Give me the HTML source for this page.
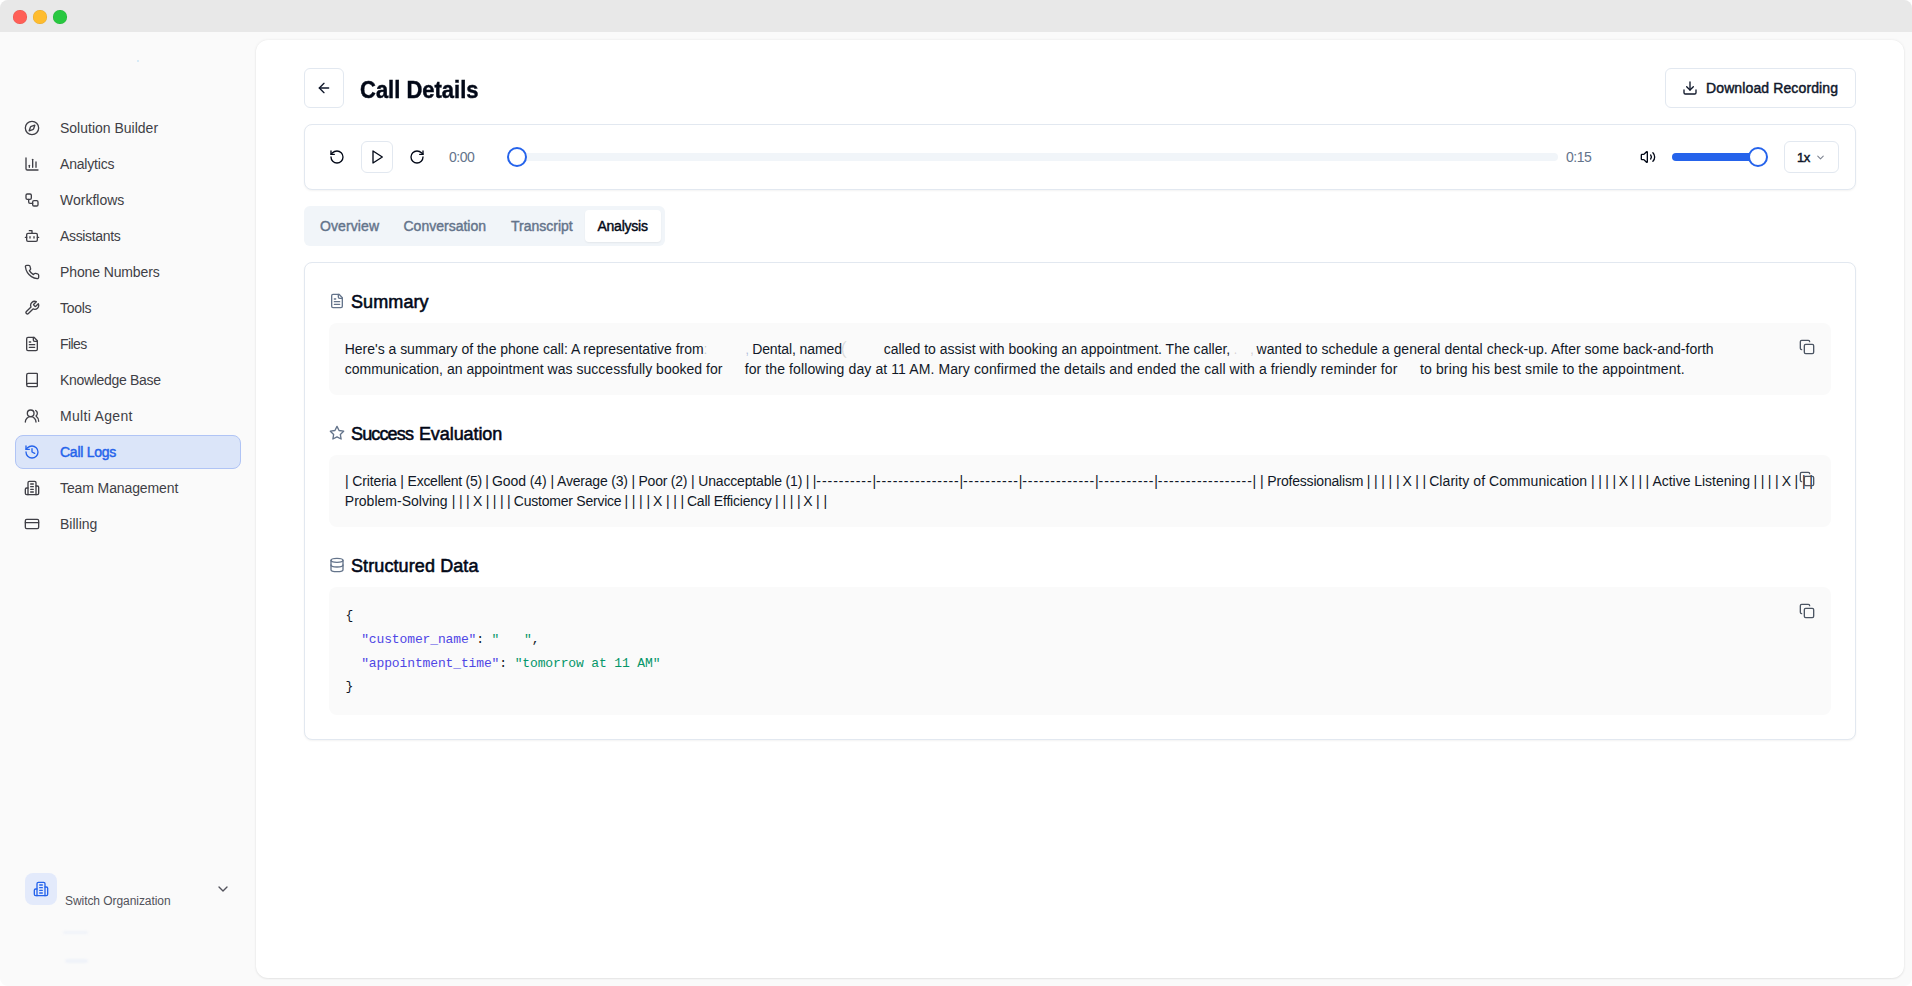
<!DOCTYPE html>
<html lang="en">
<head>
<meta charset="utf-8">
<title>Call Details</title>
<style>
*{box-sizing:border-box;margin:0;padding:0}
html,body{width:1912px;height:986px;overflow:hidden;background:#fff}
body{font-family:"Liberation Sans",Arial,sans-serif;color:#020817;position:relative}
svg{display:block}
.ico{position:absolute;fill:none;stroke:currentColor;stroke-width:2;stroke-linecap:round;stroke-linejoin:round;width:16px;height:16px}
.abs{position:absolute;white-space:nowrap}
#win{position:absolute;left:0;top:0;width:1912px;height:986px;background:#fafafa;border-radius:8px;overflow:hidden}
#titlebar{position:absolute;left:0;top:0;width:1912px;height:32px;background:#e8e8e8}
.tl{position:absolute;top:10.4px;width:13.2px;height:13.2px;border-radius:50%;box-shadow:inset 0 0 0 .5px rgba(0,0,0,.10)}
.nav{position:absolute;left:60px;font-size:14px;line-height:20px;color:#3f3f46;white-space:nowrap}
.ni{color:#3f3f46;left:24px}
.semi{-webkit-text-stroke:.45px currentColor}
#main{position:absolute;left:256px;top:40px;width:1648px;height:938px;background:#fff;border-radius:12px;box-shadow:0 0 3px rgba(0,0,0,.08),0 1px 2px rgba(0,0,0,.06)}
.btn{position:absolute;border:1px solid #e2e8f0;border-radius:6px;background:#fff}
.card{position:absolute;border:1px solid #e2e8f0;border-radius:8px;background:#fff;box-shadow:0 1px 2px rgba(0,0,0,.05)}
h1{position:absolute;left:360px;top:73px;font-size:24px;line-height:34px;font-weight:700;color:#020817;white-space:nowrap;transform:scaleX(.916);transform-origin:0 50%;-webkit-text-stroke:.45px currentColor}
.sec-h{position:absolute;left:351px;font-size:18px;line-height:24px;color:#020817;white-space:nowrap;-webkit-text-stroke:.55px currentColor}
.sec-i{color:#64748b}
.box{position:absolute;left:329px;width:1502px;background:#fafafa;border-radius:8px}
.sg{position:absolute;font-size:14px;line-height:20px;color:#111827;white-space:pre}
.copy{color:#4b5563;left:1799px}
.tab{position:absolute;top:216px;line-height:20px;font-size:14px;color:#64748b;white-space:nowrap;-webkit-text-stroke:.42px currentColor}
.mono{position:absolute;font-family:"Liberation Mono","DejaVu Sans Mono",monospace;font-size:13px;letter-spacing:-.13px;line-height:20px;color:#111827;white-space:pre}
.k{color:#4f46e5}.v{color:#059669}
</style>
</head>
<body>
<div id="win">
<div id="titlebar">
  <div class="tl" style="left:13.4px;background:#ff5f57"></div>
  <div class="tl" style="left:33.4px;background:#febc2e"></div>
  <div class="tl" style="left:53.4px;background:#28c840"></div>
</div>

<!-- sidebar -->
<div style="position:absolute;left:15px;top:435px;width:226px;height:34px;border-radius:8px;background:#dbe5f9;border:1px solid #b0c4f5"></div>

<svg class="ico ni" viewBox="0 0 24 24" style="top:120px"><circle cx="12" cy="12" r="10"/><path d="m16.24 7.76-1.804 5.411a2 2 0 0 1-1.265 1.265L7.76 16.24l1.804-5.411a2 2 0 0 1 1.265-1.265z"/></svg>
<div class="nav" style="top:118px">Solution Builder</div>
<svg class="ico ni" viewBox="0 0 24 24" style="top:156px"><path d="M3 3v16a2 2 0 0 0 2 2h16"/><path d="M18 17V9"/><path d="M13 17V5"/><path d="M8 17v-3"/></svg>
<div class="nav" style="top:154px;letter-spacing:-.19px">Analytics</div>
<svg class="ico ni" viewBox="0 0 24 24" style="top:192px"><rect width="8" height="8" x="3" y="3" rx="2"/><path d="M7 11v4a2 2 0 0 0 2 2h4"/><rect width="8" height="8" x="13" y="13" rx="2"/></svg>
<div class="nav" style="top:190px">Workflows</div>
<svg class="ico ni" viewBox="0 0 24 24" style="top:228px"><path d="M12 8V4H8"/><rect width="16" height="12" x="4" y="8" rx="2"/><path d="M2 14h2"/><path d="M20 14h2"/><path d="M15 13v2"/><path d="M9 13v2"/></svg>
<div class="nav" style="top:226px;letter-spacing:-.34px">Assistants</div>
<svg class="ico ni" viewBox="0 0 24 24" style="top:264px"><path d="M22 16.92v3a2 2 0 0 1-2.18 2 19.79 19.79 0 0 1-8.63-3.07 19.5 19.5 0 0 1-6-6 19.79 19.79 0 0 1-3.07-8.67A2 2 0 0 1 4.11 2h3a2 2 0 0 1 2 1.72 12.84 12.84 0 0 0 .7 2.81 2 2 0 0 1-.45 2.11L8.09 9.91a16 16 0 0 0 6 6l1.27-1.27a2 2 0 0 1 2.11-.45 12.84 12.84 0 0 0 2.81.7A2 2 0 0 1 22 16.92z"/></svg>
<div class="nav" style="top:262px;letter-spacing:-.12px">Phone Numbers</div>
<svg class="ico ni" viewBox="0 0 24 24" style="top:300px"><path d="M14.7 6.3a1 1 0 0 0 0 1.4l1.6 1.6a1 1 0 0 0 1.4 0l3.77-3.77a6 6 0 0 1-7.94 7.94l-6.91 6.91a2.12 2.12 0 0 1-3-3l6.91-6.91a6 6 0 0 1 7.94-7.94l-3.76 3.76z"/></svg>
<div class="nav" style="top:298px;letter-spacing:-.3px">Tools</div>
<svg class="ico ni" viewBox="0 0 24 24" style="top:336px"><path d="M15 2H6a2 2 0 0 0-2 2v16a2 2 0 0 0 2 2h12a2 2 0 0 0 2-2V7Z"/><path d="M14 2v4a2 2 0 0 0 2 2h4"/><path d="M10 9H8"/><path d="M16 13H8"/><path d="M16 17H8"/></svg>
<div class="nav" style="top:334px;letter-spacing:-.6px">Files</div>
<svg class="ico ni" viewBox="0 0 24 24" style="top:372px"><path d="M4 19.5v-15A2.5 2.5 0 0 1 6.5 2H19a1 1 0 0 1 1 1v18a1 1 0 0 1-1 1H6.5a1 1 0 0 1 0-5H20"/></svg>
<div class="nav" style="top:370px;letter-spacing:-.31px">Knowledge Base</div>
<svg class="ico ni" viewBox="0 0 24 24" style="top:408px"><path d="M18 21a8 8 0 0 0-16 0"/><circle cx="10" cy="8" r="5"/><path d="M22 20c0-3.37-2-6.5-4-8a5 5 0 0 0-.45-8.3"/></svg>
<div class="nav" style="top:406px;letter-spacing:.32px">Multi Agent</div>
<svg class="ico ni" viewBox="0 0 24 24" style="top:444px;color:#2563eb"><path d="M3 12a9 9 0 1 0 9-9 9.75 9.75 0 0 0-6.74 2.74L3 8"/><path d="M3 3v5h5"/><path d="M12 7v5l4 2"/></svg>
<div class="nav semi" style="top:442px;letter-spacing:-.25px;color:#2563eb">Call Logs</div>
<svg class="ico ni" viewBox="0 0 24 24" style="top:480px"><path d="M6 22V4a2 2 0 0 1 2-2h8a2 2 0 0 1 2 2v18Z"/><path d="M6 12H4a2 2 0 0 0-2 2v6a2 2 0 0 0 2 2h2"/><path d="M18 9h2a2 2 0 0 1 2 2v9a2 2 0 0 1-2 2h-2"/><path d="M10 6h4"/><path d="M10 10h4"/><path d="M10 14h4"/><path d="M10 18h4"/></svg>
<div class="nav" style="top:478px;letter-spacing:-.11px">Team Management</div>
<svg class="ico ni" viewBox="0 0 24 24" style="top:516px"><rect width="20" height="14" x="2" y="5" rx="2"/><line x1="2" x2="22" y1="10" y2="10"/></svg>
<div class="nav" style="top:514px">Billing</div>

<!-- org switcher -->
<div style="position:absolute;left:25px;top:873px;width:32px;height:32px;border-radius:8px;background:#e3eafb"></div>
<svg class="ico" viewBox="0 0 24 24" style="left:33px;top:881px;color:#2563eb"><path d="M6 22V4a2 2 0 0 1 2-2h8a2 2 0 0 1 2 2v18Z"/><path d="M6 12H4a2 2 0 0 0-2 2v6a2 2 0 0 0 2 2h2"/><path d="M18 9h2a2 2 0 0 1 2 2v9a2 2 0 0 1-2 2h-2"/><path d="M10 6h4"/><path d="M10 10h4"/><path d="M10 14h4"/><path d="M10 18h4"/></svg>
<div class="abs" style="left:65px;top:893px;font-size:12px;line-height:16px;letter-spacing:-.06px;color:#52525b">Switch Organization</div>
<svg class="ico" viewBox="0 0 24 24" style="left:215px;top:881px;color:#52525b"><path d="m6 9 6 6 6-6"/></svg>
<div style="position:absolute;left:63px;top:931px;width:25px;height:3px;border-radius:2px;background:#e4ebf8;filter:blur(1px);opacity:.45"></div>
<div style="position:absolute;left:65px;top:959px;width:23px;height:4px;border-radius:2px;background:#e4ebf8;filter:blur(1.2px);opacity:.5"></div>

<div id="main"></div>

<!-- header -->
<div class="btn" style="left:304px;top:68px;width:40px;height:40px"></div>
<svg class="ico" viewBox="0 0 24 24" style="left:316px;top:80px;color:#0f172a"><path d="m12 19-7-7 7-7"/><path d="M19 12H5"/></svg>
<h1>Call Details</h1>
<div class="btn" style="left:1665px;top:68px;width:191px;height:40px"></div>
<svg class="ico" viewBox="0 0 24 24" style="left:1682px;top:80px;color:#0f172a"><path d="M21 15v4a2 2 0 0 1-2 2H5a2 2 0 0 1-2-2v-4"/><polyline points="7 10 12 15 17 10"/><line x1="12" x2="12" y1="15" y2="3"/></svg>
<div class="abs semi" style="left:1706px;top:78px;line-height:20px;font-size:14px;letter-spacing:.12px;color:#0f172a">Download Recording</div>

<!-- player -->
<div class="card" style="left:304px;top:124px;width:1552px;height:66px"></div>
<svg class="ico" viewBox="0 0 24 24" style="left:328.7px;top:148.7px;color:#020817"><path d="M3 12a9 9 0 1 0 9-9 9.75 9.75 0 0 0-6.74 2.74L3 8"/><path d="M3 3v5h5"/></svg>
<div class="btn" style="left:361px;top:141px;width:32px;height:32px"></div>
<svg class="ico" viewBox="0 0 24 24" style="left:368.6px;top:148.8px;color:#020817"><polygon points="6 3 20 12 6 21 6 3"/></svg>
<svg class="ico" viewBox="0 0 24 24" style="left:409px;top:148.7px;color:#020817"><path d="M21 12a9 9 0 1 1-9-9c2.52 0 4.93 1 6.74 2.74L21 8"/><path d="M21 3v5h-5"/></svg>
<div class="abs" style="left:449px;top:147px;font-size:14px;line-height:20px;letter-spacing:-.45px;color:#64748b">0:00</div>
<div style="position:absolute;left:516px;top:153px;width:1042px;height:8px;border-radius:4px;background:#f1f5f9"></div>
<div style="position:absolute;left:507px;top:147px;width:20px;height:20px;border-radius:50%;border:2px solid #2563eb;background:#fff"></div>
<div class="abs" style="left:1566px;top:147px;font-size:14px;line-height:20px;letter-spacing:-.45px;color:#64748b">0:15</div>
<svg class="ico" viewBox="0 0 24 24" style="left:1640px;top:149px;color:#020817"><path d="M11 4.702a.705.705 0 0 0-1.203-.498L6.413 7.587A1.4 1.4 0 0 1 5.416 8H3a1 1 0 0 0-1 1v6a1 1 0 0 0 1 1h2.416a1.4 1.4 0 0 1 .997.413l3.383 3.384A.705.705 0 0 0 11 19.298z"/><path d="M16 9a5 5 0 0 1 0 6"/><path d="M19.364 18.364a9 9 0 0 0 0-12.728"/></svg>
<div style="position:absolute;left:1672px;top:153px;width:88px;height:8px;border-radius:4px;background:#2563eb"></div>
<div style="position:absolute;left:1748px;top:147px;width:20px;height:20px;border-radius:50%;border:2px solid #2563eb;background:#fff"></div>
<div class="btn" style="left:1784px;top:141px;width:55px;height:32px"></div>
<div class="abs semi" style="left:1797px;top:148px;line-height:20px;font-size:13px;letter-spacing:-.6px;color:#0f172a">1x</div>
<svg class="ico" viewBox="0 0 24 24" style="left:1814.6px;top:151.6px;width:11px;height:11px;color:#7c8290;stroke-width:2.3"><path d="m6 9 6 6 6-6"/></svg>

<!-- tabs -->
<div style="position:absolute;left:304px;top:206px;width:361px;height:40px;border-radius:6px;background:#f1f5f9"></div>
<div style="position:absolute;left:585px;top:210px;width:76px;height:32px;border-radius:4px;background:#fff;box-shadow:0 1px 2px rgba(0,0,0,.06)"></div>
<div class="tab" style="left:320px;letter-spacing:.1px">Overview</div>
<div class="tab" style="left:403.5px">Conversation</div>
<div class="tab" style="left:511px">Transcript</div>
<div class="tab" style="left:597.5px;letter-spacing:-.25px;color:#020817">Analysis</div>

<!-- content -->
<div class="card" style="left:304px;top:262px;width:1552px;height:478px"></div>

<svg class="ico sec-i" viewBox="0 0 24 24" style="left:328.7px;top:293.2px"><path d="M15 2H6a2 2 0 0 0-2 2v16a2 2 0 0 0 2 2h12a2 2 0 0 0 2-2V7Z"/><path d="M14 2v4a2 2 0 0 0 2 2h4"/><path d="M10 9H8"/><path d="M16 13H8"/><path d="M16 17H8"/></svg>
<div class="sec-h" style="top:290px;letter-spacing:.1px">Summary</div>
<div class="box" style="top:323px;height:72px"></div>
<svg class="ico copy" viewBox="0 0 24 24" style="top:339px"><rect width="14" height="14" x="8" y="8" rx="2" ry="2"/><path d="M4 16c-1.1 0-2-.9-2-2V4c0-1.1.9-2 2-2h10c1.1 0 2 .9 2 2"/></svg>

<svg class="ico sec-i" viewBox="0 0 24 24" style="left:329.1px;top:425.3px"><polygon points="12 2 15.09 8.26 22 9.27 17 14.14 18.18 21.02 12 17.77 5.82 21.02 7 14.14 2 9.27 8.91 8.26 12 2"/></svg>
<div class="sec-h" style="top:422px"><span style="letter-spacing:-.85px">Success</span><span style="letter-spacing:.8px"> </span><span style="letter-spacing:-.07px">Evaluation</span></div>
<div class="box" style="top:455px;height:72px"></div>

<svg class="ico sec-i" viewBox="0 0 24 24" style="left:329.3px;top:557.1px"><ellipse cx="12" cy="5" rx="9" ry="3"/><path d="M3 5V19A9 3 0 0 0 21 19V5"/><path d="M3 12A9 3 0 0 0 21 12"/></svg>
<div class="sec-h" style="top:554px;letter-spacing:.1px">Structured Data</div>
<div class="box" style="top:587px;height:128px"></div>

<div style="position:absolute;left:136.5px;top:59.8px;width:2.5px;height:2px;background:#cde6f6;border-radius:1px;filter:blur(.4px)"></div>
<span class="sg" style="left:703.5px;top:339px;color:rgba(17,24,39,.22)">:</span>
<span class="sg" style="left:745.2px;top:339px;color:rgba(60,90,170,.38)">,</span>
<span class="sg" style="left:840.5px;top:338px;font-size:19px;color:rgba(0,0,0,.12)">(</span>
<span class="sg" style="left:1233.5px;top:339px;color:rgba(17,24,39,.18)">.</span>
<span class="sg" style="left:1250px;top:339px;color:rgba(17,24,39,.2)">,</span>
<span class="sg" style="left:344.7px;top:339px;letter-spacing:-0.015px">Here&#x27;s a summary of the phone call: A representative from</span>
<span class="sg" style="left:752.2px;top:339px;letter-spacing:-0.105px">Dental, named</span>
<span class="sg" style="left:883.7px;top:339px;letter-spacing:0.009px">called to assist with booking an appointment. The caller,</span>
<span class="sg" style="left:1256.5px;top:339px;letter-spacing:0.038px">wanted to schedule a general dental check-up. After some back-and-forth</span>
<span class="sg" style="left:344.7px;top:359px;letter-spacing:0.020px">communication, an appointment was successfully booked for</span>
<span class="sg" style="left:744.7px;top:359px;letter-spacing:0.104px">for the following day at 11 AM. Mary confirmed the details and ended the call with a friendly reminder for</span>
<span class="sg" style="left:1420.0px;top:359px;letter-spacing:0.129px">to bring his best smile to the appointment.</span>
<span class="sg" style="left:345.1px;top:471px">|</span>
<span class="sg" style="left:352.2px;top:471px;letter-spacing:-0.103px">Criteria</span>
<span class="sg" style="left:400.3px;top:471px">|</span>
<span class="sg" style="left:407.6px;top:471px;letter-spacing:-0.270px">Excellent (5)</span>
<span class="sg" style="left:485.2px;top:471px">|</span>
<span class="sg" style="left:492.0px;top:471px;letter-spacing:-0.081px">Good (4)</span>
<span class="sg" style="left:550.4px;top:471px">|</span>
<span class="sg" style="left:557.1px;top:471px;letter-spacing:-0.210px">Average (3)</span>
<span class="sg" style="left:631.5px;top:471px">|</span>
<span class="sg" style="left:638.5px;top:471px;letter-spacing:-0.235px">Poor (2)</span>
<span class="sg" style="left:691.0px;top:471px">|</span>
<span class="sg" style="left:698.2px;top:471px;letter-spacing:-0.164px">Unacceptable (1)</span>
<span class="sg" style="left:805.7px;top:471px;letter-spacing:-0.216px">| |</span>
<span class="sg" style="left:816.3px;top:471px;letter-spacing:0.963px">----------</span>
<span class="sg" style="left:872.4px;top:471px">|</span>
<span class="sg" style="left:875.9px;top:471px;letter-spacing:0.921px">---------------</span>
<span class="sg" style="left:959.5px;top:471px">|</span>
<span class="sg" style="left:963.0px;top:471px;letter-spacing:0.923px">----------</span>
<span class="sg" style="left:1018.7px;top:471px">|</span>
<span class="sg" style="left:1022.2px;top:471px;letter-spacing:0.957px">-------------</span>
<span class="sg" style="left:1095.1px;top:471px">|</span>
<span class="sg" style="left:1098.6px;top:471px;letter-spacing:0.922px">----------</span>
<span class="sg" style="left:1154.3px;top:471px">|</span>
<span class="sg" style="left:1157.8px;top:471px;letter-spacing:0.923px">-----------------</span>
<span class="sg" style="left:1252.6px;top:471px;letter-spacing:-0.066px">| |</span>
<span class="sg" style="left:1267.3px;top:471px;letter-spacing:-0.195px">Professionalism</span>
<span class="sg" style="left:1366.7px;top:471px;letter-spacing:-0.114px">| | | | |</span>
<span class="sg" style="left:1402.4px;top:471px;letter-spacing:0.156px">X</span>
<span class="sg" style="left:1415.2px;top:471px;letter-spacing:-0.166px">| |</span>
<span class="sg" style="left:1429.2px;top:471px;letter-spacing:0.067px">Clarity of Communication</span>
<span class="sg" style="left:1590.9px;top:471px;letter-spacing:-0.146px">| | | |</span>
<span class="sg" style="left:1618.8px;top:471px;letter-spacing:0.456px">X</span>
<span class="sg" style="left:1631.2px;top:471px;letter-spacing:-0.166px">| | |</span>
<span class="sg" style="left:1652.5px;top:471px;letter-spacing:-0.035px">Active Listening</span>
<span class="sg" style="left:1753.4px;top:471px;letter-spacing:-0.146px">| | | |</span>
<span class="sg" style="left:1781.7px;top:471px;letter-spacing:0.356px">X</span>
<span class="sg" style="left:1794.6px;top:471px;letter-spacing:-0.116px">| | |</span>
<span class="sg" style="left:344.8px;top:491px;letter-spacing:0.005px">Problem-Solving</span>
<span class="sg" style="left:451.8px;top:491px;letter-spacing:-0.216px">| | |</span>
<span class="sg" style="left:472.9px;top:491px;letter-spacing:-0.344px">X</span>
<span class="sg" style="left:485.7px;top:491px;letter-spacing:-0.213px">| | | |</span>
<span class="sg" style="left:513.8px;top:491px;letter-spacing:-0.229px">Customer Service</span>
<span class="sg" style="left:624.4px;top:491px;letter-spacing:-0.080px">| | | |</span>
<span class="sg" style="left:653.0px;top:491px;letter-spacing:0.256px">X</span>
<span class="sg" style="left:665.9px;top:491px;letter-spacing:-0.141px">| | |</span>
<span class="sg" style="left:686.9px;top:491px;letter-spacing:-0.205px">Call Efficiency</span>
<span class="sg" style="left:775.1px;top:491px;letter-spacing:-0.096px">| | | |</span>
<span class="sg" style="left:803.2px;top:491px;letter-spacing:0.156px">X</span>
<span class="sg" style="left:815.9px;top:491px;letter-spacing:-0.016px">| |</span>

<svg class="ico copy" viewBox="0 0 24 24" style="top:471px"><rect width="14" height="14" x="8" y="8" rx="2" ry="2"/><path d="M4 16c-1.1 0-2-.9-2-2V4c0-1.1.9-2 2-2h10c1.1 0 2 .9 2 2"/></svg>

<div class="mono" style="left:345.5px;top:606px">{</div>
<div class="mono" style="left:361.2px;top:629.8px"><span class="k">"customer_name"</span>: <span class="v">"</span></div>
<div class="mono" style="left:524px;top:629.8px"><span class="v">"</span>,</div>
<div class="mono" style="left:361.2px;top:653.6px"><span class="k">"appointment_time"</span>: <span class="v">"tomorrow at 11 AM"</span></div>
<div class="mono" style="left:345.5px;top:677.4px">}</div>
<svg class="ico copy" viewBox="0 0 24 24" style="top:603px"><rect width="14" height="14" x="8" y="8" rx="2" ry="2"/><path d="M4 16c-1.1 0-2-.9-2-2V4c0-1.1.9-2 2-2h10c1.1 0 2 .9 2 2"/></svg>

</div>
</body>
</html>
